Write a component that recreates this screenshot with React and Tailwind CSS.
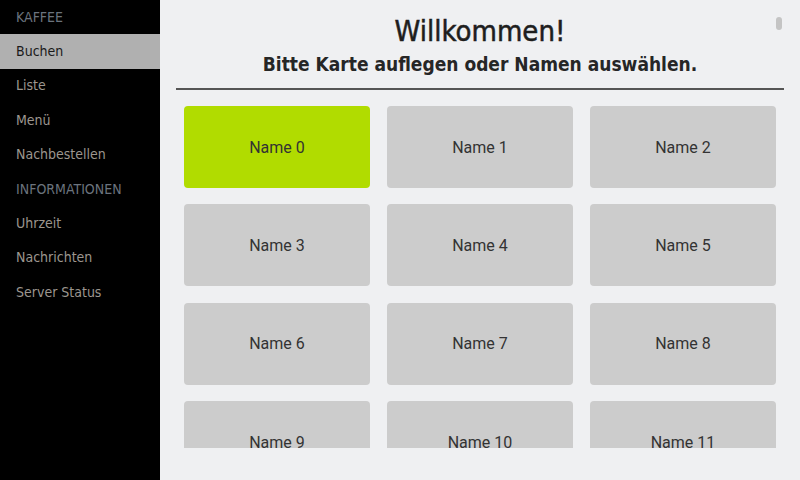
import React from "react";

const menu = [
  { label: "KAFFEE", header: true },
  { label: "Buchen", active: true },
  { label: "Liste" },
  { label: "Menü" },
  { label: "Nachbestellen" },
  { label: "INFORMATIONEN", header: true },
  { label: "Uhrzeit" },
  { label: "Nachrichten" },
  { label: "Server Status" },
];

const names = Array.from({ length: 12 }, (_, i) => `Name ${i}`);

const SideItem = ({ label, header, active }) => (
  <div
    className={`h-[34.4px] flex items-center pl-4 text-[14px] ${
      active
        ? "bg-[#b0b0b0] text-[#1a1a1a]"
        : header
        ? "text-[#6b737d]"
        : "text-[#9c968f]"
    }`}
  >
    {label}
  </div>
);

const App = () => {
  return (
    <div className="w-[800px] h-[480px] flex overflow-hidden bg-[#eff0f2]">
      <div
        className="w-[160px] h-full bg-black flex flex-col"
        style={{ fontFamily: '"DejaVu Sans Condensed", "DejaVu Sans", sans-serif' }}
      >
        {menu.map((m) => (
          <SideItem key={m.label} {...m} />
        ))}
      </div>

      <div className="relative flex-1 h-full flex flex-col px-4 pb-8">
        <div
          className="flex flex-col items-center text-[#1e1e1e] pt-[12px]"
          style={{ fontFamily: '"DejaVu Sans Condensed", "DejaVu Sans", sans-serif' }}
        >
          <h1 className="text-[29px] leading-[38px] font-normal [-webkit-text-stroke:0.5px_#1e1e1e]">
            Willkommen!
          </h1>
          <h2 className="text-[19px] leading-[26px] font-bold mt-[1px] text-[#262626]">
            Bitte Karte auflegen oder Namen auswählen.
          </h2>
        </div>
        <div className="h-[2px] bg-[#555] mt-[11px]" />

        <div className="flex-1 overflow-hidden px-2 pt-4">
          <div
            className="grid grid-cols-3 gap-x-[17px] gap-y-[16.4px]"
            style={{ fontFamily: "Roboto, sans-serif" }}
          >
            {names.map((n, i) => (
              <div
                key={n}
                className={`h-[82px] rounded flex items-center justify-center pt-[1px] text-[16px] text-[#333] ${
                  i === 0 ? "bg-[#b1dc00]" : "bg-[#cccccc]"
                }`}
              >
                {n}
              </div>
            ))}
          </div>
        </div>

        <div className="absolute right-[18px] top-[17px] w-[6px] h-[13px] rounded-full bg-[#c4c4c4]" />
      </div>
    </div>
  );
};

export default App;
